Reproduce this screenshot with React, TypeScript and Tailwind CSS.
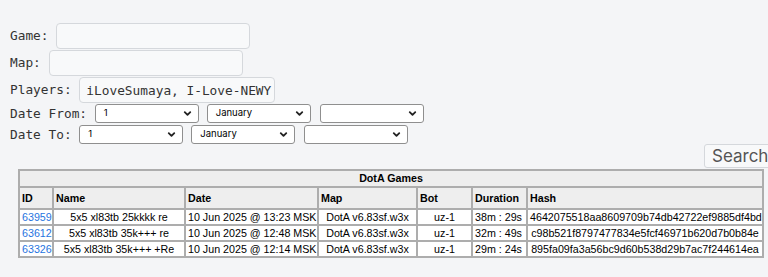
import { ChevronDown } from "lucide-react";

type Game = {
  id: string;
  name: string;
  date: string;
  map: string;
  bot: string;
  duration: string;
  hash: string;
};

const games: Game[] = [
  {
    id: "63959",
    name: "5x5 xl83tb 25kkkk re",
    date: "10 Jun 2025 @ 13:23 MSK",
    map: "DotA v6.83sf.w3x",
    bot: "uz-1",
    duration: "38m : 29s",
    hash: "4642075518aa8609709b74db42722ef9885df4bd",
  },
  {
    id: "63612",
    name: "5x5 xl83tb 35k+++ re",
    date: "10 Jun 2025 @ 12:48 MSK",
    map: "DotA v6.83sf.w3x",
    bot: "uz-1",
    duration: "32m : 49s",
    hash: "c98b521f8797477834e5fcf46971b620d7b0b84e",
  },
  {
    id: "63326",
    name: "5x5 xl83tb 35k+++ +Re",
    date: "10 Jun 2025 @ 12:14 MSK",
    map: "DotA v6.83sf.w3x",
    bot: "uz-1",
    duration: "29m : 24s",
    hash: "895fa09fa3a56bc9d60b538d29b7ac7f244614ea",
  },
];

const TextField = ({ label, width, value }: { label: string; width: string; value?: string }) => (
  <div className="flex h-[26px] items-center">
    <span className="whitespace-pre">{label}</span>
    <input
      readOnly
      value={value ?? ""}
      className={`h-[26px] ${width} rounded-[4px] border border-[#d5d8dc] bg-[#f8f9fa] pl-[6px] pr-0 font-['DejaVu_Sans_Mono',monospace] text-[12.8px] text-[#333] outline-none`}
    />
  </div>
);

const FakeSelect = ({ text, className = "" }: { text: string; className?: string }) => (
  <div
    className={`flex h-[19px] w-[104px] items-center justify-between rounded-[3px] border border-[#8f8f8f] bg-white pl-[8px] pr-[5px] font-['Inter',sans-serif] text-[9.5px] text-black ${className}`}
  >
    <span>{text}</span>
    <ChevronDown size={11} strokeWidth={4} className="text-[#222]" />
  </div>
);

const DateRow = ({ label }: { label: string }) => (
  <div className="flex h-[19px] items-center">
    <span className="whitespace-pre">{label}</span>
    <FakeSelect text="1" />
    <FakeSelect text="January" className="ml-[8px]" />
    <FakeSelect text="" className="ml-[9px]" />
  </div>
);

const cell = "border-2 border-[#adadad] px-[2px] py-0 leading-[13px]";

export default function App() {
  return (
    <div className="min-h-screen overflow-hidden bg-[#f4f5f7] pl-[10px] pt-[23px] font-['DejaVu_Sans_Mono',monospace] text-[12.8px] text-[#333]">
      <div className="flex flex-col gap-[1px]">
        <TextField label="Game: " width="w-[194px]" />
        <TextField label="Map: " width="w-[194px]" />
        <TextField label="Players: " width="w-[196px]" value="iLoveSumaya, I-Love-NEWY" />
      </div>
      <div className="mt-[1px] flex flex-col gap-[2px]">
        <DateRow label="Date From: " />
        <DateRow label="Date To: " />
      </div>

      <div className="flex justify-end">
        <button
          type="button"
          className="-mr-[10px] h-[24px] w-[74px] rounded-[3px] border border-[#d5d8dc] bg-[#f8f9fa] pl-[7px] text-left font-['Inter',sans-serif] text-[17px] leading-[20px] text-[#555]"
        >
          Search
        </button>
      </div>

      <table className="ml-[8px] mt-[1px] w-[746px] table-fixed border-collapse bg-white font-['Liberation_Sans',Arial,sans-serif] text-[10.7px] text-black">
        <colgroup>
          <col className="w-[34px]" />
          <col className="w-[132px]" />
          <col className="w-[133px]" />
          <col className="w-[99px]" />
          <col className="w-[55px]" />
          <col className="w-[55px]" />
          <col />
        </colgroup>
        <thead>
          <tr className="h-[17px] bg-[#eeeeee]">
            <th colSpan={7} className={`${cell} text-center font-bold`}>
              DotA Games
            </th>
          </tr>
          <tr className="h-[22px] bg-[#eeeeee]">
            {["ID", "Name", "Date", "Map", "Bot", "Duration", "Hash"].map((h) => (
              <th key={h} className={`${cell} text-left font-bold`}>
                {h}
              </th>
            ))}
          </tr>
        </thead>
        <tbody>
          {games.map((g) => (
            <tr key={g.id} className="h-[16px]">
              <td className={`${cell} text-left`}>
                <a href="#" className="text-[#1f74e0]">
                  {g.id}
                </a>
              </td>
              <td className={`${cell} text-center`}>{g.name}</td>
              <td className={`${cell} whitespace-nowrap text-left`}>{g.date}</td>
              <td className={`${cell} whitespace-nowrap text-center`}>{g.map}</td>
              <td className={`${cell} text-center`}>{g.bot}</td>
              <td className={`${cell} whitespace-nowrap text-left`}>{g.duration}</td>
              <td className={`${cell} whitespace-nowrap text-center`}>{g.hash}</td>
            </tr>
          ))}
        </tbody>
      </table>
    </div>
  );
}
